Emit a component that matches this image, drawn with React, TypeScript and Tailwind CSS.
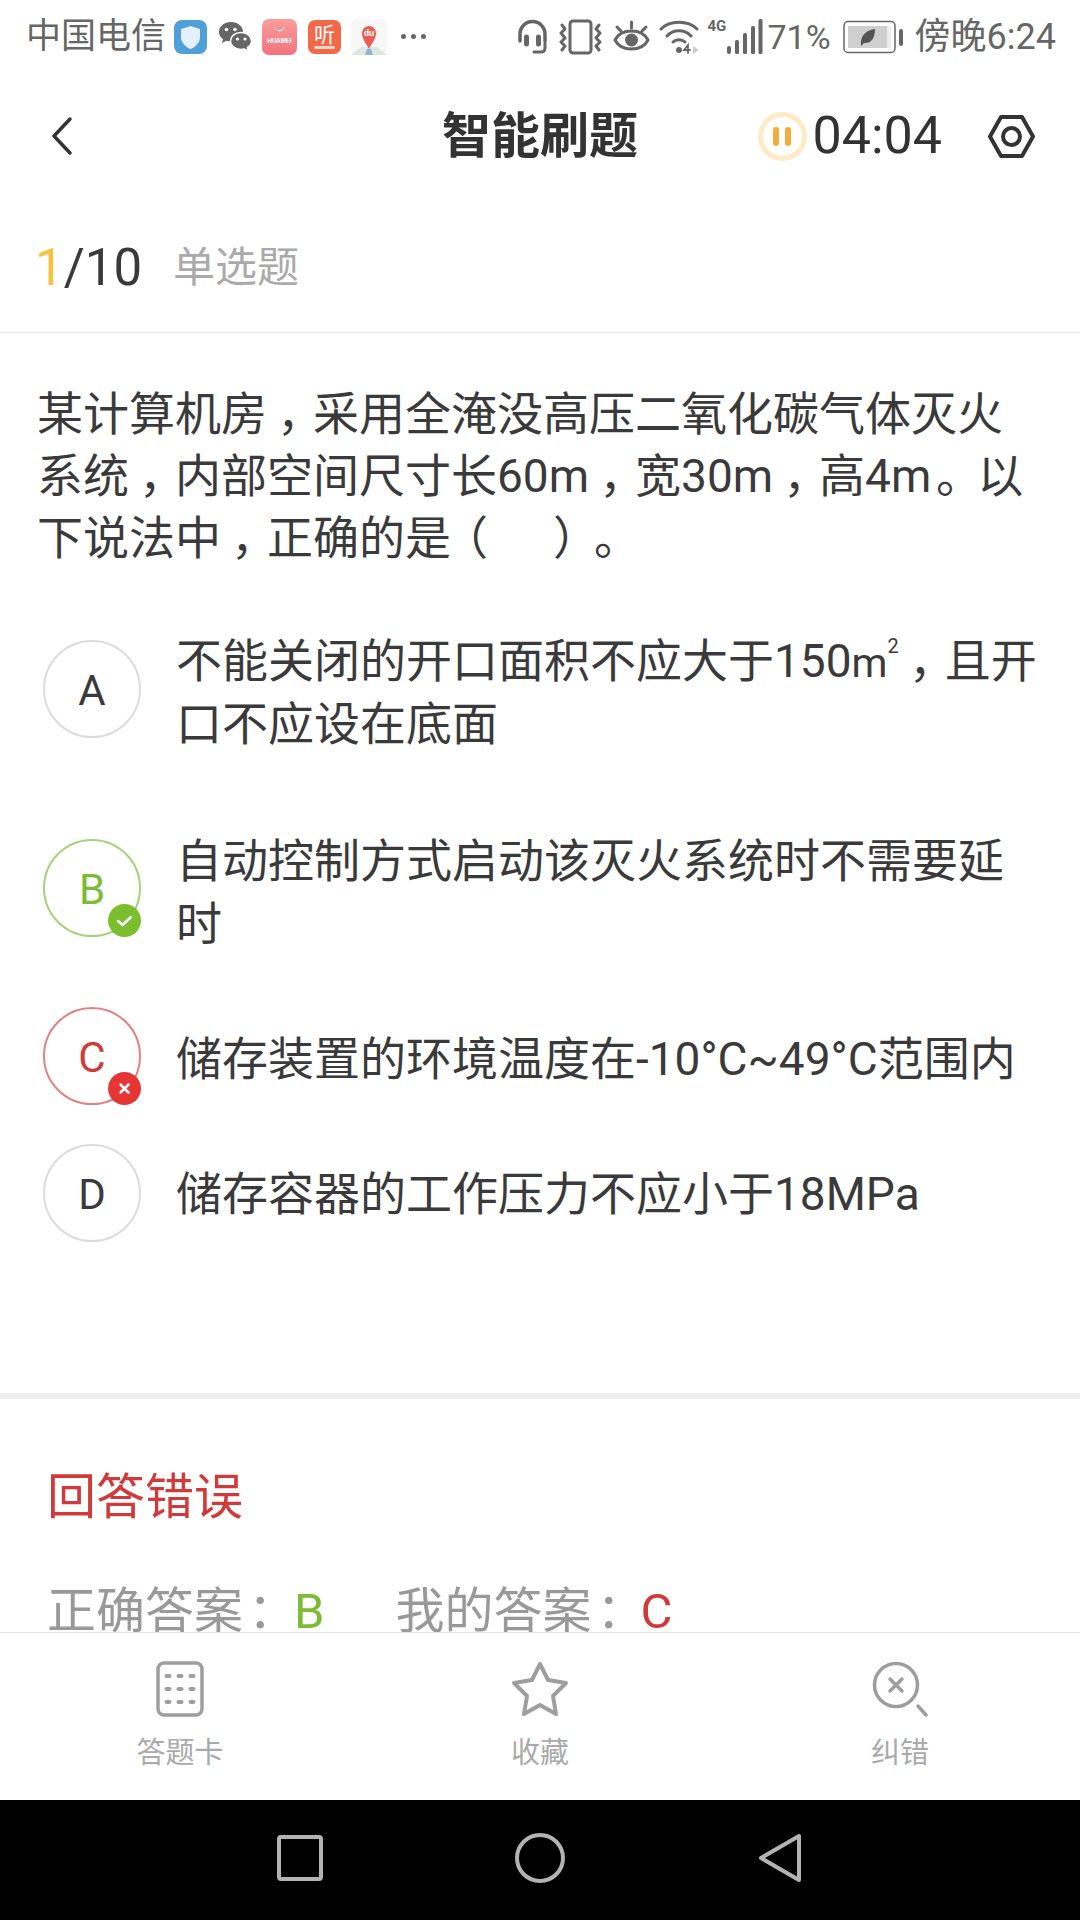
import React from 'react';

const FONT = "font-['Roboto','Noto_Sans_CJK_SC',sans-serif]";

// commas, colons and full stops sit further right in their cell in the reference
function Cjk({ text }: { text: string }) {
  return (
    <>
      {text.split(/([，：。])/).map((part, i) =>
        part === '，' ? (
          <span key={i} className="inline-block translate-x-[0.22em]">{part}</span>
        ) : part === '：' ? (
          <span key={i} className="inline-block translate-x-[0.1em]">{part}</span>
        ) : part === '。' ? (
          <span key={i} className="inline-block translate-x-[0.1em]">{part}</span>
        ) : (
          <React.Fragment key={i}>{part}</React.Fragment>
        ),
      )}
    </>
  );
}

function ShieldIcon() {
  return (
    <svg width="33" height="34" viewBox="0 0 33 34">
      <rect x="0" y="0" width="33" height="34" rx="8" fill="#4f9fd8" />
      <path d="M16.500 6 L26 9 V17 C26 23 21 27 16.500 29 C12 27 7 23 7 17 V9 Z" fill="#e4f1fa" />
    </svg>
  );
}

function WechatIcon() {
  return (
    <svg width="34" height="32" viewBox="0 0 34 32">
      <path d="M13 1 C6 1 1 5.500 1 11 C1 14 2.500 16.500 5 18 L4 22 L8.500 19.800 C10 20.300 11.500 20.500 13 20.500 C20 20.500 25 16 25 11 C25 5.500 20 1 13 1 Z" fill="#666" />
      <path d="M23 11.500 C16.500 11.500 12.500 15.500 12.500 20 C12.500 24.500 16.500 28.500 23 28.500 C24.300 28.500 25.500 28.300 26.500 28 L30.500 30.500 L29.500 26.500 C32 25 33.500 22.700 33.500 20 C33.500 15.500 29.500 11.500 23 11.500 Z" fill="#666" stroke="#fff" strokeWidth="1.500" />
      <circle cx="8.500" cy="8.500" r="1.800" fill="#fff" />
      <circle cx="17" cy="8.500" r="1.800" fill="#fff" />
      <circle cx="19.500" cy="18" r="1.600" fill="#fff" />
      <circle cx="27" cy="18" r="1.600" fill="#fff" />
    </svg>
  );
}

function HuaweiIcon() {
  return (
    <svg width="35" height="36" viewBox="0 0 35 36">
      <defs>
        <linearGradient id="hw" x1="0" y1="0" x2="0" y2="1">
          <stop offset="0" stopColor="#fb9c9c" />
          <stop offset="1" stopColor="#f2737f" />
        </linearGradient>
      </defs>
      <rect width="35" height="36" rx="7" fill="url(#hw)" />
      <path d="M13 8 C13.500 13 21.500 13 22 8" fill="none" stroke="#fff" strokeWidth="1" />
      <text x="17.500" y="24" textAnchor="middle" fontSize="6.500" fontWeight="700" fill="#fff" fontFamily="Roboto, sans-serif">HUAWEI</text>
    </svg>
  );
}

function ListenIcon() {
  return (
    <svg width="33" height="34" viewBox="0 0 33 34">
      <rect width="33" height="34" rx="7" fill="#f2684a" />
      <text x="16.500" y="22" textAnchor="middle" fontSize="21" fill="#fff" fontFamily="'Noto Sans CJK SC', sans-serif">听</text>
      <rect x="6" y="26" width="21" height="3" rx="1.500" fill="#ffd5c8" />
    </svg>
  );
}

function BaiduMapIcon() {
  return (
    <svg width="36" height="36" viewBox="0 0 36 36">
      <rect width="36" height="36" rx="6" fill="#f7f7f5" />
      <path d="M0 36 L10 28 H26 L36 36 Z" fill="#dbe9e0" />
      <path d="M14 36 L16 30 H20 L22 36 Z" fill="#8fb3dc" />
      <path d="M18 30 C15 24 11 20 11 14 A7 7 0 0 1 25 14 C25 20 21 24 18 30 Z" fill="#ee5a55" />
      <text x="18" y="17" textAnchor="middle" fontSize="9" fontWeight="700" fill="#fff" fontFamily="Roboto, sans-serif">du</text>
    </svg>
  );
}

function HeadsetIcon() {
  return (
    <svg width="31" height="36" viewBox="0 0 31 36" fill="none" stroke="#666" strokeLinecap="round">
      <path d="M3 22 V15 A12.500 12.500 0 0 1 28 15 V22" strokeWidth="3.500" />
      <path d="M9.500 18 V25" strokeWidth="5" />
      <path d="M21.500 18 V25" strokeWidth="5" />
      <path d="M28 24 V29 Q28 33 24 33 H17" strokeWidth="3" />
    </svg>
  );
}

function VibrateIcon() {
  return (
    <svg width="43" height="36" viewBox="0 0 43 36" fill="none" stroke="#666" strokeWidth="3" strokeLinecap="round" strokeLinejoin="round">
      <rect x="11" y="2" width="21" height="32" rx="3" />
      <path d="M3 6 L6 10 L2 14 L6 19 L2 23 L6 27 L3 31" />
      <path d="M40 6 L37 10 L41 14 L37 19 L41 23 L37 27 L40 31" />
    </svg>
  );
}

function EyeIcon() {
  return (
    <svg width="37" height="36" viewBox="0 0 37 36" fill="none" stroke="#666" strokeLinecap="round">
      <path d="M2 21 C8 9 29 9 35 21 C29 33 8 33 2 21 Z" strokeWidth="3" />
      <circle cx="18.500" cy="21" r="6.500" fill="#666" stroke="none" />
      <path d="M4 8 L8 12 M18.500 3 V9 M33 8 L29 12" strokeWidth="3" />
    </svg>
  );
}

function WifiIcon() {
  return (
    <svg width="41" height="36" viewBox="0 0 41 36" fill="none" stroke="#666" strokeLinecap="round">
      <path d="M2 10 C11 1 29 1 38 10" strokeWidth="3" />
      <path d="M8 17 C14 10 26 10 32 17" strokeWidth="3" />
      <path d="M14 23 C17 20 23 20 26 23" strokeWidth="3" />
      <circle cx="20" cy="31" r="3" fill="#666" stroke="none" />
      <path d="M29 34 V26 L25 31 H31" strokeWidth="1.800" />
      <path d="M34 27 L40 31 L34 35 Z" fill="#ccc" stroke="none" />
    </svg>
  );
}

function SignalIcon() {
  return (
    <svg width="36" height="36" viewBox="0 0 36 36" fill="#666">
      <rect x="0" y="27" width="4" height="8" rx="2" />
      <rect x="8" y="21" width="4" height="14" rx="1.500" />
      <rect x="16" y="14" width="4" height="21" rx="1.500" />
      <rect x="24" y="7" width="4" height="28" rx="1.500" />
      <rect x="31.500" y="0" width="4" height="35" rx="1.500" />
    </svg>
  );
}

function BatteryIcon() {
  return (
    <svg width="60" height="34" viewBox="0 0 60 34">
      <rect x="1" y="1.500" width="51" height="31" rx="4" fill="#fff" stroke="#666" strokeWidth="1.500" />
      <rect x="5" y="6" width="39" height="22" fill="#cfcfcf" />
      <rect x="44" y="6" width="4" height="22" fill="#eee" />
      <path d="M18 25 C17 15 24 10 32 9 C32 18 28 24 21 23 L18 26 Z" fill="#555" />
      <rect x="56" y="9" width="4" height="17" rx="2" fill="#666" />
    </svg>
  );
}

function StatusBar() {
  return (
    <div className="h-[75px] flex items-center justify-between pl-[26px] pr-[24px] pb-[2px] text-[#666]">
      <div className="flex items-center">
        <span className="text-[35px] leading-none">中国电信</span>
        <div className="ml-[8px]"><ShieldIcon /></div>
        <div className="ml-[11px]"><WechatIcon /></div>
        <div className="ml-[10px]"><HuaweiIcon /></div>
        <div className="ml-[11px]"><ListenIcon /></div>
        <div className="ml-[10px]"><BaiduMapIcon /></div>
        <div className="ml-[14px] flex gap-[5px]">
          <span className="w-[5px] h-[5px] rounded-full bg-[#666]" />
          <span className="w-[5px] h-[5px] rounded-full bg-[#666]" />
          <span className="w-[5px] h-[5px] rounded-full bg-[#666]" />
        </div>
      </div>
      <div className="flex items-center">
        <HeadsetIcon />
        <div className="ml-[11px]"><VibrateIcon /></div>
        <div className="ml-[11px]"><EyeIcon /></div>
        <div className="ml-[9px]"><WifiIcon /></div>
        <span className="ml-[7px] w-[19px] self-start text-[15px] leading-none font-bold">4G</span>
        <div className="ml-[1px]"><SignalIcon /></div>
        <span className="ml-[4px] text-[34px] leading-none">71%</span>
        <div className="ml-[12px]"><BatteryIcon /></div>
        <span className="ml-[12px] text-[36px] leading-none">傍晚6:24</span>
      </div>
    </div>
  );
}

function Header() {
  return (
    <div className="h-[120px] grid grid-cols-3 items-center pt-[2px]">
      <div className="pl-[48px]">
        <svg width="28" height="40" viewBox="0 0 28 40" fill="none" stroke="#333" strokeWidth="3.500" strokeLinecap="round" strokeLinejoin="round">
          <path d="M22 3 L6 20 L22 37" />
        </svg>
      </div>
      <div className="text-center text-[49px] leading-none font-bold text-[#333]">智能刷题</div>
      <div className="flex items-center justify-end pr-[45px]">
        <div className="w-[49px] h-[49px] rounded-full border-[5px] border-[#fcebc5] flex items-center justify-center gap-[6px]">
          <span className="w-[6px] h-[19px] rounded-full bg-[#f1ac3c]" />
          <span className="w-[6px] h-[19px] rounded-full bg-[#f1ac3c]" />
        </div>
        <span className="ml-[6px] text-[52px] leading-none text-[#333]">04:04</span>
        <svg className="ml-[46px]" width="47" height="43" viewBox="0 0 47 43" fill="none" stroke="#333" strokeWidth="4" strokeLinejoin="round">
          <path d="M13 2 H34 L45 21.500 L34 41 H13 L2 21.500 Z" />
          <circle cx="23.500" cy="21.500" r="8.500" />
        </svg>
      </div>
    </div>
  );
}

type Option = {
  letter: string;
  lines: React.ReactNode;
  tone: 'plain' | 'right' | 'wrong';
  rowClass: string;
  circleClass: string;
  textClass: string;
};

const options: Option[] = [
  {
    letter: 'A',
    lines: (
      <>
        不能关闭的开口面积不应大于150<span className="text-[41px] leading-none">m</span>
        <sup className="text-[20px] leading-none align-baseline relative top-[-24px]">2</sup>
        <Cjk text="，且开口不应设在底面" />
      </>
    ),
    tone: 'plain',
    rowClass: 'h-[200px]',
    circleClass: 'mt-[10px]',
    textClass: '',
  },
  {
    letter: 'B',
    lines: '自动控制方式启动该灭火系统时不需要延时',
    tone: 'right',
    rowClass: 'h-[177px]',
    circleClass: 'mt-[9px]',
    textClass: '',
  },
  {
    letter: 'C',
    lines: '储存装置的环境温度在-10°C~49°C范围内',
    tone: 'wrong',
    rowClass: 'h-[137px]',
    circleClass: '',
    textClass: 'pt-[21px]',
  },
  {
    letter: 'D',
    lines: '储存容器的工作压力不应小于18MPa',
    tone: 'plain',
    rowClass: 'h-[100px]',
    circleClass: '',
    textClass: 'pt-[19px]',
  },
];

function OptionBadge({ letter, tone, className }: { letter: string; tone: Option['tone']; className: string }) {
  const ring =
    tone === 'right'
      ? 'border-[#a5d37a] text-[#7cbb35]'
      : tone === 'wrong'
        ? 'border-[#e58080] text-[#d03a3a]'
        : 'border-[#dcdcdc] text-[#3a3a3a]';
  return (
    <div className={`relative shrink-0 w-[98px] h-[98px] pt-[3px] rounded-full border-2 flex items-center justify-center text-[42px] leading-none ${ring} ${className}`}>
      {letter}
      {tone === 'right' && (
        <svg className="absolute right-[-2px] bottom-[-2px]" width="33" height="33" viewBox="0 0 33 33">
          <circle cx="16.500" cy="16.500" r="16.500" fill="#7cbf2e" />
          <path d="M10 17 L14.500 21 L23 13" fill="none" stroke="#fff" strokeWidth="2.500" strokeLinecap="round" strokeLinejoin="round" />
        </svg>
      )}
      {tone === 'wrong' && (
        <svg className="absolute right-[-2px] bottom-[-2px]" width="33" height="33" viewBox="0 0 33 33">
          <circle cx="16.500" cy="16.500" r="16.500" fill="#e63535" />
          <path d="M12.500 12.500 L20.500 20.500 M20.500 12.500 L12.500 20.500" fill="none" stroke="#fff" strokeWidth="2.500" strokeLinecap="round" />
        </svg>
      )}
    </div>
  );
}

function TabIcon({ name }: { name: 'card' | 'star' | 'fix' }) {
  if (name === 'card') {
    return (
      <svg width="48" height="56" viewBox="0 0 48 56" fill="#9e9e9e">
        <rect x="2" y="2" width="44" height="52" rx="6" fill="none" stroke="#9e9e9e" strokeWidth="3.500" />
        {[15, 28, 41].map((y) =>
          [12, 24, 36].map((x) => <rect key={`${x}-${y}`} x={x - 3.500} y={y - 2} width="7" height="4" rx="2" />),
        )}
      </svg>
    );
  }
  if (name === 'star') {
    return (
      <svg width="58" height="56" viewBox="0 0 58 56" fill="none" stroke="#9e9e9e" strokeWidth="4" strokeLinejoin="round">
        <path d="M29 3 L37 19 L55 22 L42 35 L45 53 L29 44 L13 53 L16 35 L3 22 L21 19 Z" />
      </svg>
    );
  }
  return (
    <svg width="56" height="56" viewBox="0 0 56 56" fill="none" stroke="#9e9e9e" strokeLinecap="round">
      <circle cx="24" cy="24" r="21.500" strokeWidth="3.500" />
      <path d="M18 18 L30 30 M30 18 L18 30" strokeWidth="3.500" />
      <path d="M46 45 L54 54" strokeWidth="3.500" />
    </svg>
  );
}

function TabBar() {
  const tabs = [
    { name: 'card' as const, label: '答题卡' },
    { name: 'star' as const, label: '收藏' },
    { name: 'fix' as const, label: '纠错' },
  ];
  return (
    <div className="h-[168px] shrink-0 border-t border-[#e2e2e2] bg-white grid grid-cols-3">
      {tabs.map((tab) => (
        <div key={tab.name} className="flex flex-col items-center pt-[28px]">
          <TabIcon name={tab.name} />
          <span className="mt-[22px] text-[29px] leading-none text-[#aaa]">{tab.label}</span>
        </div>
      ))}
    </div>
  );
}

function NavBar() {
  return (
    <div className="h-[120px] shrink-0 bg-black grid grid-cols-3 items-center px-[180px] pb-[4px]">
      <div className="flex justify-center">
        <svg width="46" height="46" viewBox="0 0 46 46" fill="none" stroke="#b3b3b3" strokeWidth="4" strokeLinejoin="round">
          <rect x="2" y="2" width="42" height="42" rx="2" />
        </svg>
      </div>
      <div className="flex justify-center">
        <svg width="50" height="50" viewBox="0 0 50 50" fill="none" stroke="#b3b3b3" strokeWidth="4">
          <circle cx="25" cy="25" r="23" />
        </svg>
      </div>
      <div className="flex justify-center">
        <svg width="44" height="50" viewBox="0 0 44 50" fill="none" stroke="#b3b3b3" strokeWidth="4" strokeLinejoin="round">
          <path d="M41 3 V47 L3 25 Z" />
        </svg>
      </div>
    </div>
  );
}

export default function App() {
  return (
    <div className={`w-[1080px] h-[1920px] bg-white flex flex-col overflow-hidden ${FONT}`}>
      <StatusBar />
      <Header />
      <div className="flex-1 min-h-0 overflow-hidden">
        <div className="h-[138px] border-b border-[#e6e6e6] flex items-center pl-[35px] pt-[8px]">
          <span className="text-[51px] leading-none text-[#3a3a3a]">
            <span className="text-[#f5c242]">1</span>/10
          </span>
          <span className="ml-[31px] text-[42px] leading-none text-[#aaa]">单选题</span>
        </div>

        <p className="mt-[50px] px-[37px] text-[46px] leading-[62px] text-[#3a3a3a]">
          <Cjk text="某计算机房，采用全淹没高压二氧化碳气体灭火系统，内部空间尺寸长60m，宽30m，高4m。以下说法中，正确的是" />
          <span className="inline-block -translate-x-[9px]">（</span>
          <span className="mx-[8px]">　</span>
          <span className="inline-block -translate-x-[6px]">）</span>
          <span className="inline-block -translate-x-[11px]">。</span>
        </p>

        <div className="mt-[61px] pl-[43px] pr-[37px]">
          {options.map((opt) => (
            <div key={opt.letter} className={`flex items-start ${opt.rowClass}`}>
              <OptionBadge letter={opt.letter} tone={opt.tone} className={opt.circleClass} />
              <div className={`ml-[35px] text-[46px] leading-[63px] text-[#3a3a3a] ${opt.textClass}`}>{opt.lines}</div>
            </div>
          ))}
        </div>

        <div className="mt-[149px] h-[6px] bg-[#eee]" />

        <div className="pl-[47px] pt-[74px]">
          <div className="text-[49px] leading-none text-[#d03a3a]">回答错误</div>
          <div className="mt-[65px] flex text-[49px] leading-none text-[#999]">
            <span><Cjk text="正确答案：" /></span>
            <span className="ml-[2px] text-[#7cbb35]">B</span>
            <span className="ml-[71px]"><Cjk text="我的答案：" /></span>
            <span className="text-[#d03a3a]">C</span>
          </div>
        </div>
      </div>
      <TabBar />
      <NavBar />
    </div>
  );
}
